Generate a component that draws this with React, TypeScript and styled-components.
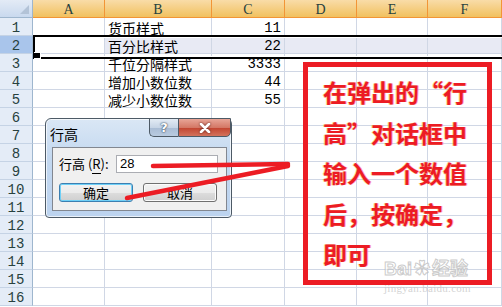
import React from 'react'
import styled, { createGlobalStyle, css } from 'styled-components'

const color = {
  grid: '#d0d7e5',
  rowHead: '#e4ecf7',
  rowHeadSel: '#a9c5eb',
  rowHeadLine: '#9eb6ce',
  colHeadTop: '#f9dca8',
  colHeadBottom: '#f1c15f',
  colHeadLine: '#f29536',
  headText: '#27413e',
  rowShade: '#e8eaf4',
  red: '#ec1c24',
}

const cols = ['A', 'B', 'C', 'D', 'E', 'F']

const data: Record<number, { b: string; c: string }> = {
  1: { b: '货币样式', c: '11' },
  2: { b: '百分比样式', c: '22' },
  3: { b: '千位分隔样式', c: '3333' },
  4: { b: '增加小数位数', c: '44' },
  5: { b: '减少小数位数', c: '55' },
}

const rows = Array.from({ length: 16 }, (_, i) => i + 1)

const GlobalStyle = createGlobalStyle`
  html, body {
    margin: 0;
    padding: 0;
    background: #fff;
  }
  body {
    font-family: 'Noto Sans CJK SC', 'DejaVu Sans', sans-serif;
  }
`

export default function App() {
  return (
    <>
      <GlobalStyle />
      <Stage>
        <Sheet>
          <Corner />
          {cols.map((c) => (
            <ColHeader key={c}>{c}</ColHeader>
          ))}
          {rows.map((r) => (
            <React.Fragment key={r}>
              <RowHeader $selected={r === 2}>{r}</RowHeader>
              <Cell $shade={false} />
              <Cell $shade={r === 2}>{data[r]?.b}</Cell>
              <Cell $shade={r === 2} $num>
                {data[r]?.c}
              </Cell>
              <Cell $shade={r === 2} />
              <Cell $shade={r === 2} />
              <Cell $shade={r === 2} />
            </React.Fragment>
          ))}
        </Sheet>

        <Selection />
        <FillHandle />

        <Dialog>
          <TitleBar>
            <Title>行高</Title>
            <CaptionButtons>
              <HelpButton>?</HelpButton>
              <CloseButton>
                <svg width="12" height="10" viewBox="0 0 12 10">
                  <path d="M2 1 L10 9 M10 1 L2 9" stroke="#fff" strokeWidth="2.6" strokeLinecap="round" />
                </svg>
              </CloseButton>
            </CaptionButtons>
          </TitleBar>
          <Panel>
            <FieldRow>
              <Label>
                行高 (<u>R</u>):
              </Label>
              <Input>28</Input>
            </FieldRow>
            <ButtonRow>
              <PushButton $focused>确定</PushButton>
              <PushButton>取消</PushButton>
            </ButtonRow>
          </Panel>
        </Dialog>

        <Strokes width="502" height="307" viewBox="0 0 502 307">
          <path d="M153 166 L288 164" stroke={color.red} strokeWidth="4.5" strokeLinecap="round" />
          <path d="M127 198 L288 166" stroke={color.red} strokeWidth="4.5" strokeLinecap="round" />
        </Strokes>

        <Callout>
          在弹出的“行
          <br />
          高”对话框中
          <br />
          输入一个数值
          <br />
          后，按确定，
          <br />
          即可
        </Callout>

        <Watermark>
          <Brand>
            Bai<Paw>✿</Paw>经验
          </Brand>
          <Domain>jingyan.baidu.com</Domain>
        </Watermark>
      </Stage>
    </>
  )
}

const Stage = styled.div`
  position: relative;
  width: 502px;
  height: 307px;
  overflow: hidden;
  background: #fff;
`

const Sheet = styled.div`
  display: grid;
  grid-template-columns: 33px 72px 107px 73px 72px 71px 74px;
  grid-auto-rows: 18px;
`

const headText = css`
  font-family: 'Liberation Mono', 'DejaVu Sans Mono', monospace;
  font-size: 13px;
  color: ${color.headText};
  display: flex;
  align-items: center;
  justify-content: center;
  box-sizing: border-box;
`

const Corner = styled.div`
  position: relative;
  box-sizing: border-box;
  background: linear-gradient(#e3ebf6, #c9d9ee);
  border-right: 1px solid ${color.rowHeadLine};
  border-bottom: 1px solid ${color.rowHeadLine};

  &::after {
    content: '';
    position: absolute;
    right: 3px;
    bottom: 3px;
    border-style: solid;
    border-width: 0 0 9px 9px;
    border-color: transparent transparent #b3c3d7 transparent;
  }
`

const ColHeader = styled.div`
  ${headText};
  font-family: 'Liberation Serif', 'DejaVu Serif', serif;
  font-size: 14px;
  background: linear-gradient(${color.colHeadTop}, ${color.colHeadBottom});
  border-right: 1px solid ${color.colHeadLine};
  border-bottom: 1px solid ${color.colHeadLine};
  padding-top: 2px;
`

const RowHeader = styled.div<{ $selected: boolean }>`
  ${headText};
  font-size: 14px;
  background: ${(p) => (p.$selected ? color.rowHeadSel : color.rowHead)};
  border-right: 1px solid ${color.rowHeadLine};
  border-bottom: 1px solid #c5d3e5;
  padding-top: 2px;
`

const Cell = styled.div<{ $shade: boolean; $num?: boolean }>`
  box-sizing: border-box;
  background: ${(p) => (p.$shade ? color.rowShade : '#fff')};
  border-right: 1px solid ${color.grid};
  border-bottom: 1px solid ${color.grid};
  font-family: ${(p) =>
    p.$num ? "'Liberation Mono', monospace" : "'Noto Sans CJK SC', sans-serif"};
  font-size: 14px;
  line-height: 14px;
  color: #000;
  padding: 3px ${(p) => (p.$num ? '3px' : '0')} 0 ${(p) => (p.$num ? '0' : '3px')};
  text-align: ${(p) => (p.$num ? 'right' : 'left')};
  white-space: nowrap;
`

const Selection = styled.div`
  position: absolute;
  left: 33px;
  top: 35px;
  right: -4px;
  height: 20px;
  border: 2px solid #000;
  border-right: none;
  box-shadow: inset 0 1px 0 #fff, inset 0 -1px 0 #fff;
  pointer-events: none;
`

const FillHandle = styled.div`
  position: absolute;
  left: 34px;
  top: 52px;
  width: 6px;
  height: 5px;
  background: #000;
  border: 1px solid #fff;
  border-left: none;
`

const Dialog = styled.div`
  position: absolute;
  left: 45px;
  top: 118px;
  width: 187px;
  height: 100px;
  box-sizing: border-box;
  border: 1px solid #4d5a66;
  border-radius: 6px 6px 4px 4px;
  background: linear-gradient(#dae7f5 0%, #c3d8f0 40%, #bcd3ef 100%);
  box-shadow: inset 0 0 0 1px rgba(255, 255, 255, 0.7);
  display: flex;
  flex-direction: column;
`

const TitleBar = styled.div`
  height: 28px;
  display: flex;
  align-items: flex-start;
  justify-content: space-between;
`

const Title = styled.div`
  font-family: 'Noto Sans CJK SC', sans-serif;
  font-size: 14px;
  color: #000;
  padding: 7px 0 0 4px;
  line-height: 16px;
`

const CaptionButtons = styled.div`
  display: flex;
  margin-top: -1px;
  margin-right: 0;
`

const captionBase = css`
  height: 19px;
  box-sizing: border-box;
  border: 1px solid #4d5a66;
  display: flex;
  align-items: center;
  justify-content: center;
`

const HelpButton = styled.div`
  ${captionBase};
  width: 29px;
  border-radius: 0 0 0 5px;
  border-right: none;
  background: linear-gradient(#e3ebf4 0%, #c7d5e6 50%, #a9bcd4 51%, #b9cbe0 100%);
  font-family: 'DejaVu Sans', sans-serif;
  font-weight: bold;
  font-size: 13px;
  color: #fff;
  text-shadow: 0 0 2px #2c3e55, 0 0 1px #2c3e55;
`

const CloseButton = styled.div`
  ${captionBase};
  width: 53px;
  border-radius: 0 0 5px 0;
  background: linear-gradient(#e8a597 0%, #d47866 50%, #c2432f 51%, #d3735d 100%);

  & svg {
    filter: drop-shadow(0 0 1px #5a1d14);
  }
`

const Panel = styled.div`
  margin: 0 4px 6px 6px;
  flex: 1;
  box-sizing: border-box;
  border: 1px solid #828790;
  background: #f0f0f0;
  padding: 6px 8px 0 6px;
  display: flex;
  flex-direction: column;
`

const FieldRow = styled.div`
  display: flex;
  align-items: center;
  justify-content: space-between;
  height: 19px;
`

const Label = styled.span`
  font-family: 'Noto Sans CJK SC', sans-serif;
  font-size: 13px;
  color: #000;

  & u {
    text-decoration: none;
    border-bottom: 1px solid #000;
    line-height: 12px;
  }
`

const Input = styled.div`
  width: 102px;
  height: 18px;
  box-sizing: border-box;
  border: 1px solid #abadb3;
  background: #fff;
  font-family: 'Liberation Sans', sans-serif;
  font-size: 13px;
  line-height: 16px;
  padding-left: 3px;
  color: #000;
`

const ButtonRow = styled.div`
  display: flex;
  gap: 10px;
  margin-top: 10px;
`

const PushButton = styled.div<{ $focused?: boolean }>`
  width: 74px;
  height: 19px;
  box-sizing: border-box;
  border: 1px solid ${(p) => (p.$focused ? '#3c7fb1' : '#707070')};
  border-radius: 3px;
  box-shadow: ${(p) => (p.$focused ? 'inset 0 0 0 1px #6ed0f7' : 'inset 0 0 0 1px #fbfbfb')};
  background: linear-gradient(#f2f2f2 0%, #ebebeb 50%, #dddddd 51%, #cfcfcf 100%);
  font-family: 'Noto Sans CJK SC', sans-serif;
  font-size: 13px;
  line-height: 17px;
  text-align: center;
  color: #000;
`

const Strokes = styled.svg`
  position: absolute;
  left: 0;
  top: 0;
  pointer-events: none;
`

const Callout = styled.div`
  position: absolute;
  left: 303px;
  top: 62px;
  width: 189px;
  height: 223px;
  box-sizing: border-box;
  border: 5px solid ${color.red};
  padding: 5px 0 0 15px;
  font-family: 'Noto Sans CJK SC', sans-serif;
  font-weight: 700;
  font-size: 24px;
  line-height: 40.5px;
  color: ${color.red};
  white-space: nowrap;
  text-shadow: -1px 0 0 rgba(255, 190, 60, 0.55), 1px 0 0 rgba(240, 80, 160, 0.5);
`

const Watermark = styled.div`
  position: absolute;
  left: 384px;
  top: 259px;
  display: flex;
  flex-direction: column;
  align-items: flex-start;
  color: rgba(190, 190, 190, 0.75);
  pointer-events: none;
`

const Brand = styled.div`
  font-family: 'Liberation Sans', 'Noto Sans CJK SC', sans-serif;
  font-weight: 700;
  font-size: 18px;
  line-height: 20px;
  color: rgba(255, 255, 255, 0.6);
  -webkit-text-stroke: 1px rgba(180, 180, 180, 0.7);
  display: flex;
  align-items: center;
`

const Paw = styled.span`
  font-size: 16px;
  margin: 0 2px;
`

const Domain = styled.div`
  font-family: 'Liberation Serif', serif;
  font-size: 11px;
  line-height: 13px;
  margin-top: 3px;
  letter-spacing: 0.3px;
  color: rgba(200, 200, 200, 0.8);
`
